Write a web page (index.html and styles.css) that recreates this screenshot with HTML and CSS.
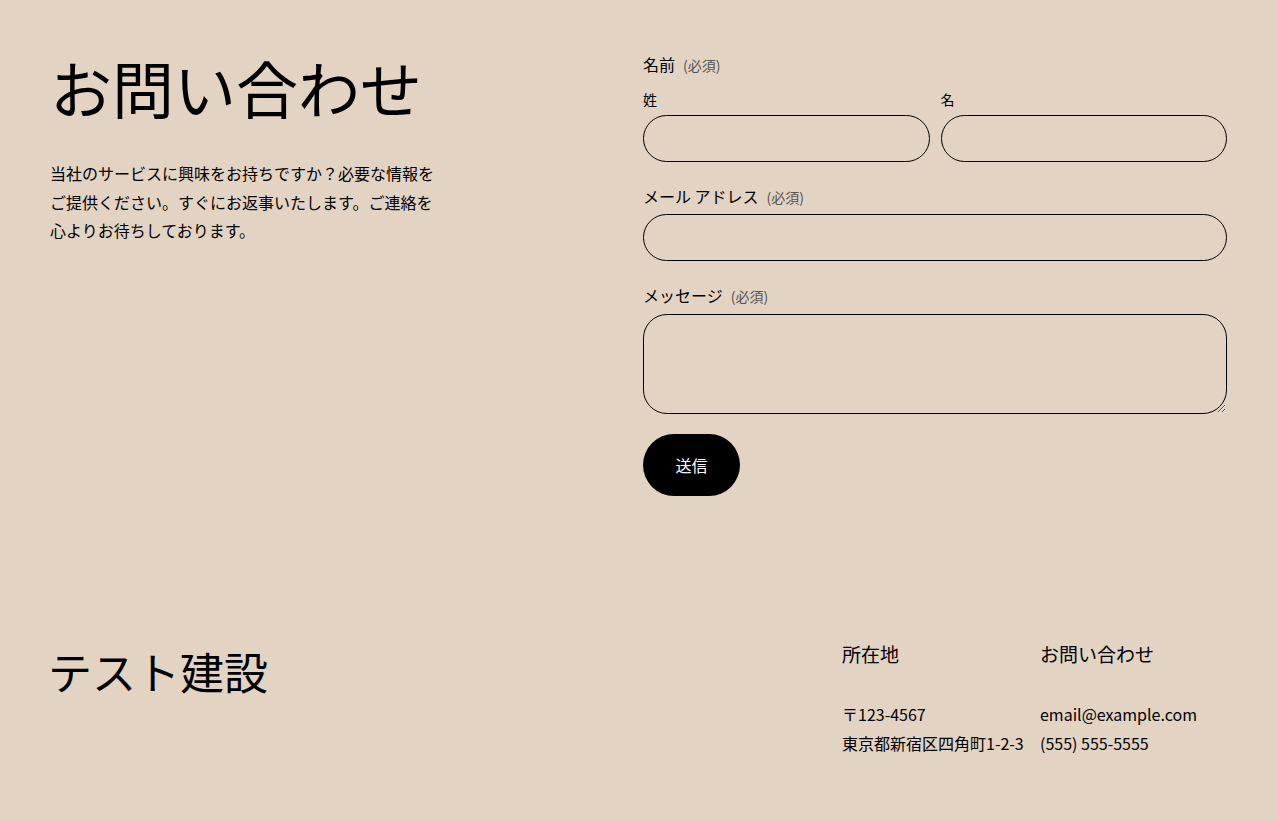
FILE: index.html
```html
<!DOCTYPE html>
<html lang="ja">
<head>
<meta charset="utf-8">
<title>お問い合わせ</title>
<link rel="stylesheet" href="styles.css">
</head>
<body>
<main class="contact">
  <section class="intro">
    <h1 class="title">お問い合わせ</h1>
    <p class="lead">当社のサービスに興味をお持ちですか？必要な情報をご提供ください。すぐにお返事いたします。ご連絡を心よりお待ちしております。</p>
  </section>
  <form class="form">
    <fieldset class="group">
      <legend class="label name-label">名前<span class="req">(必須)</span></legend>
      <div class="name-row">
        <label class="sub">
          <span class="sub-label">姓</span>
          <input class="field" type="text">
        </label>
        <label class="sub">
          <span class="sub-label">名</span>
          <input class="field" type="text">
        </label>
      </div>
    </fieldset>
    <label class="group">
      <span class="label">メール アドレス<span class="req">(必須)</span></span>
      <input class="field" type="email">
    </label>
    <label class="group">
      <span class="label msg-label">メッセージ<span class="req">(必須)</span></span>
      <textarea class="field area"></textarea>
    </label>
    <button class="submit" type="button">送信</button>
  </form>
</main>
<footer class="footer">
  <div class="brand">テスト建設</div>
  <div class="cols">
    <div class="col">
      <h3 class="col-title">所在地</h3>
      <p class="col-text">〒123-4567<br>東京都新宿区四角町1-2-3</p>
    </div>
    <div class="col">
      <h3 class="col-title">お問い合わせ</h3>
      <p class="col-text">email@example.com<br>(555) 555-5555</p>
    </div>
  </div>
</footer>
</body>
</html>
```

FILE: styles.css
```css
* { box-sizing: border-box; }
html, body { margin: 0; padding: 0; }
body {
  background: #e2d3c3;
  color: #000;
  font-family: "Noto Sans CJK JP", "Noto Sans", sans-serif;
  min-height: 821px;
}
.contact {
  display: grid;
  grid-template-columns: 1fr 584px;
  column-gap: 9px;
  padding: 50px 51px 0 50px;
}
.title {
  margin: 0;
  font-size: 62px;
  font-weight: 400;
  line-height: 1.2;
}
.lead {
  margin: 35px 0 0;
  max-width: 392px;
  font-size: 16px;
  line-height: 1.78;
}
.form {
  display: flex;
  flex-direction: column;
  padding-top: 2px;
}
.group {
  border: 0;
  margin: 0 0 22px;
  padding: 0;
  display: flex;
  flex-direction: column;
  min-width: 0;
}
.label {
  font-size: 16px;
  line-height: 1.5;
  padding: 0;
  margin-bottom: 6px;
}
.name-label { margin-bottom: 13px; }
.msg-label { margin-bottom: 7px; }
.req {
  color: #555;
  font-size: 14px;
  margin-left: 8px;
}
.name-row {
  display: grid;
  grid-template-columns: 1fr 1fr;
  column-gap: 11px;
}
.sub { display: flex; flex-direction: column; }
.sub-label {
  font-size: 14px;
  line-height: 1.5;
  margin-bottom: 5px;
}
.field {
  display: block;
  width: 100%;
  height: 47px;
  border: 1px solid #000;
  border-radius: 999px;
  background: transparent;
  font: inherit;
  padding: 0 20px;
}
.area {
  height: 100px;
  border-radius: 24px;
  padding: 12px 20px;
  resize: vertical;
}
.submit {
  align-self: flex-start;
  margin-top: -2px;
  width: 97px;
  height: 62px;
  border: 0;
  border-radius: 999px;
  background: #000;
  color: #fff;
  font: inherit;
  font-size: 16px;
}
.footer {
  display: flex;
  justify-content: space-between;
  padding: 144px 50px 0;
}
.brand {
  font-size: 44px;
  line-height: 1.2;
  padding-top: 5px;
  margin-left: -2px;
}
.cols {
  display: grid;
  grid-template-columns: 188px 188px;
  column-gap: 10px;
}
.col-title {
  margin: 0;
  font-size: 19px;
  font-weight: 400;
  line-height: 1.5;
}
.col-text {
  margin: 31px 0 0;
  font-size: 16px;
  line-height: 1.82;
}
```
